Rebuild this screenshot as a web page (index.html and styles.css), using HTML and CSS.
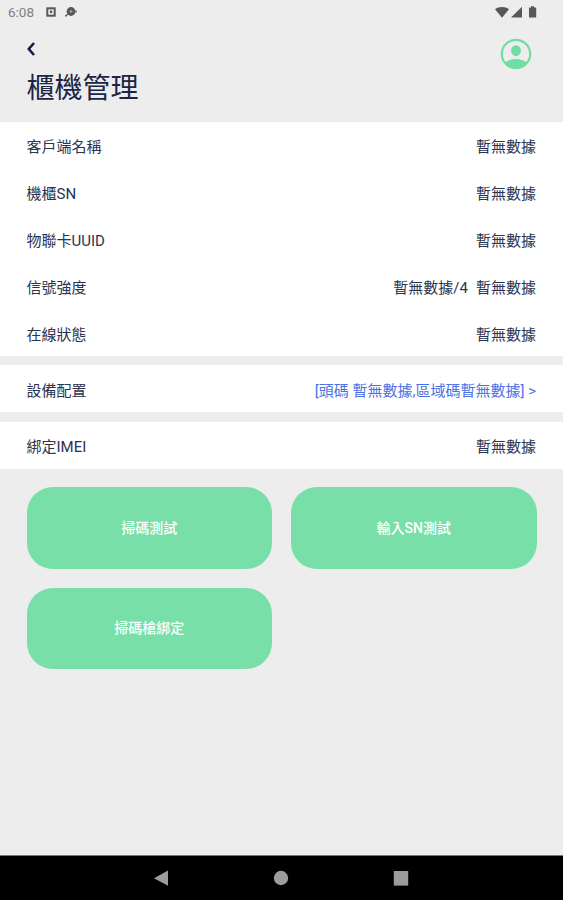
FILE: index.html
```html
<!DOCTYPE html>
<html lang="zh-Hant">
<head>
  <meta charset="UTF-8">
  <meta name="viewport" content="width=device-width, initial-scale=1.0">
  <title>櫃機管理</title>
  <link rel="stylesheet" href="styles.css">
</head>
<body>
  <!-- Status bar -->
  <div class="status-bar">
    <span class="status-time">6:08</span>
    <svg class="status-app" width="10" height="10" viewBox="0 0 10 10">
      <rect x="1.3" y="1.3" width="7.4" height="7.4" fill="none" stroke="#585858" stroke-width="2"/>
      <rect x="4" y="3.5" width="2.2" height="2.6" fill="#585858"/>
    </svg>
    <svg class="status-sync" width="14" height="12" viewBox="0 0 14 12">
      <circle cx="7" cy="5.5" r="4.4" fill="#585858"/>
      <path d="M4 8 1.2 10.3M10.5 5.5h2.5" stroke="#686868" stroke-width="1.6"/>
      <path d="M5.5 5.4h3M7 4v3" stroke="#aaa" stroke-width="1"/>
    </svg>
    <div class="status-right">
      <svg width="42" height="13" viewBox="0 0 42 13" fill="#585858">
        <path d="M0 3.2C3.8.2 10.2.2 14 3.2L7 11.8z"/>
        <path d="M27 .8V11.5H16z"/>
        <path d="M36 .2h3v1.2h1.6q.6 0 .6.6v9q0 .6-.6.6h-6q-.6 0-.6-.6V2q0-.6.6-.6H36z"/>
      </svg>
    </div>
  </div>

  <!-- Header -->
  <header class="header">
    <div>
      <a class="back" href="#" aria-label="返回">
        <svg width="9" height="14" viewBox="0 0 9 14" fill="none" stroke="#171b45" stroke-width="2.6">
          <path d="M7 1 1.800 7l5.200 6"/>
        </svg>
      </a>
      <h1 class="title">櫃機管理</h1>
    </div>
    <svg class="avatar" width="32" height="32" viewBox="0 0 32 32">
      <circle cx="16" cy="16" r="14.2" fill="none" stroke="#72dda2" stroke-width="2.2"/>
      <ellipse cx="16" cy="12.7" rx="4.9" ry="5.5" fill="#72dda2"/>
      <path d="M5.2 24.5C8.600 22.2 12 21 16 21s7.400 1.200 10.800 3.500C24.300 28 20.400 30.200 16 30.200S7.700 28 5.200 24.500z" fill="#72dda2"/>
    </svg>
  </header>

  <!-- Device info -->
  <main>
    <section class="group">
      <div class="row"><span>客戶端名稱</span><span class="value">暫無數據</span></div>
      <div class="row"><span>機櫃SN</span><span class="value">暫無數據</span></div>
      <div class="row"><span>物聯卡UUID</span><span class="value">暫無數據</span></div>
      <div class="row">
        <span>信號強度</span>
        <span class="value signal"><span>暫無數據/4</span><span>暫無數據</span></span>
      </div>
      <div class="row"><span>在線狀態</span><span class="value">暫無數據</span></div>
    </section>

    <section class="group">
      <div class="row"><span>設備配置</span><a class="value link" href="#">[頭碼 暫無數據,區域碼暫無數據] &gt;</a></div>
    </section>

    <section class="group">
      <div class="row"><span>綁定IMEI</span><span class="value">暫無數據</span></div>
    </section>

    <div class="actions">
      <button class="action-btn">掃碼測試</button>
      <button class="action-btn">輸入SN測試</button>
      <button class="action-btn">掃碼槍綁定</button>
    </div>
  </main>

  <!-- System navigation -->
  <nav class="nav-bar">
    <svg width="16" height="16" viewBox="0 0 16 16" fill="#9c9c9c"><path d="M15 .4v15.400L1 8.200z"/></svg>
    <svg width="16" height="16" viewBox="0 0 16 16" fill="#9c9c9c"><circle cx="8" cy="8" r="7.2"/></svg>
    <svg width="16" height="16" viewBox="0 0 16 16" fill="#9c9c9c"><rect x=".8" y="1" width="14.400" height="14.600"/></svg>
  </nav>
</body>
</html>
```
FILE: styles.css
```css
:root {
  --bg: #ededed;
  --ink: #2b3350;
  --green: #78dfa8;
  --link: #4a72e4;
}

* {
  box-sizing: border-box;
}

body {
  margin: 0;
  height: 100vh;
  display: flex;
  flex-direction: column;
  overflow: hidden;
  background: var(--bg);
  color: var(--ink);
  font-family: Roboto, "Noto Sans CJK TC", sans-serif;
  font-size: 15px;
}

/* Status bar */
.status-bar {
  height: 24px;
  padding: 0 26px 0 8px;
  display: flex;
  align-items: center;
}

.status-time {
  width: 38px;
  font-size: 13.5px;
  line-height: 24px;
  color: #808080;
}

.status-sync {
  margin-left: 8px;
}

.status-right {
  display: flex;
  margin-left: auto;
}

/* Header */
.header {
  height: 98px;
  padding: 14px 31px 0 26.5px;
  display: flex;
  justify-content: space-between;
}

.back {
  display: block;
  height: 14px;
  margin-top: 4px;
}

.back svg {
  display: block;
}

.title {
  margin: 13px 0 0;
  color: #1d2547;
  font-size: 28px;
  font-weight: 400;
  line-height: 40px;
}

/* Info rows */
.group {
  margin-bottom: 9.5px;
  background: #fff;
}

.row {
  height: 46.8px;
  padding: 1px 27px 0 26.5px;
  display: flex;
  align-items: center;
  justify-content: space-between;
  white-space: nowrap;
}

.signal {
  display: flex;
  gap: 8px;
}

.link {
  color: var(--link);
  text-decoration: none;
}

/* Buttons */
.actions {
  display: grid;
  grid-template-columns: 1fr 1fr;
  gap: 19px;
  padding: 9px 26.5px;
}

.action-btn {
  height: 81.5px;
  padding: 0 0 2px;
  border: 0;
  border-radius: 26px;
  background: var(--green);
  color: #fff;
  font-family: inherit;
  font-size: 14px;
  font-weight: 500;
}

/* System navigation */
.nav-bar {
  height: 45px;
  margin-top: auto;
  padding-right: 1px;
  display: flex;
  align-items: center;
  justify-content: center;
  gap: 104px;
  border-top: 1px solid #777;
  background: #000;
}
```
